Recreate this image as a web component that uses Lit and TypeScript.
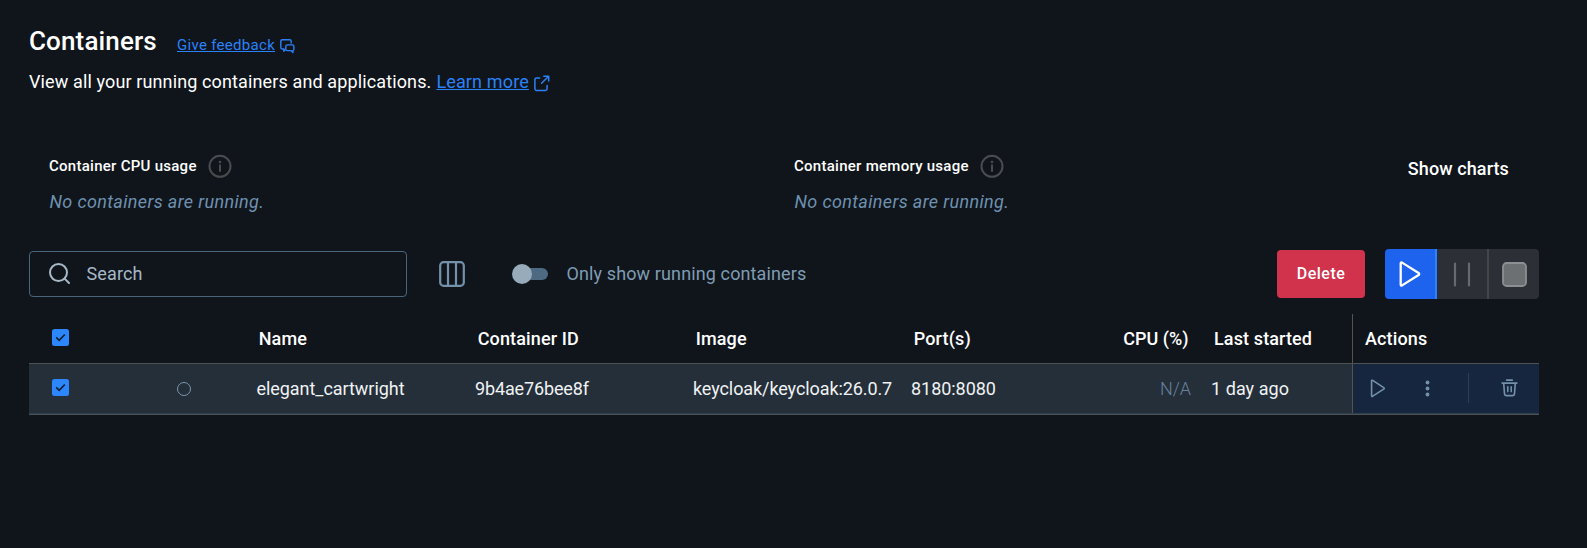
import { LitElement, html, css, svg } from "lit";
import { customElement, property } from "lit/decorators.js";

const icons = {
  feedback: svg`<svg width="16" height="15" viewBox="0 0 16 15" fill="none" stroke="currentColor" stroke-width="1.4" stroke-linejoin="round"><path d="M5.4 10.6 3.8 12.2V10H2.4Q.8 10 .8 8.4V2.3Q.8.7 2.4.7H9.6Q11.2.7 11.2 2.3V4.4"/><path d="M7.3 5.9H12.3Q13.9 5.9 13.9 7.4V10.2Q13.9 11.6 12.9 11.6V13.5L10.9 11.6H7.3Q5.8 11.6 5.8 10.2V7.4Q5.8 5.9 7.3 5.9Z"/></svg>`,
  external: svg`<svg width="16" height="17" viewBox="0 0 16 17" fill="none" stroke="currentColor" stroke-width="1.5" stroke-linecap="round" stroke-linejoin="round"><path d="M5.6 2.9H2.6Q.9 2.9.9 4.6V13.8Q.9 15.5 2.6 15.5H11.4Q13.1 15.5 13.1 13.8V10.4M9.8 1.2H14.7V6.1M14.4 1.5 7.6 8.3"/></svg>`,
  info: svg`<svg width="24" height="24" viewBox="0 0 24 24" fill="none" stroke="currentColor" stroke-width="2"><circle cx="12" cy="12.3" r="10.5"/><path d="M12 11.2V17" stroke-linecap="round"/><circle cx="12" cy="8" r="1.3" fill="currentColor" stroke="none"/></svg>`,
  search: svg`<svg width="22" height="22" viewBox="0 0 22 22" fill="none" stroke="currentColor" stroke-width="2" stroke-linecap="round"><circle cx="9.5" cy="9.5" r="8.5"/><path d="M15.6 15.6 20 20"/></svg>`,
  columns: svg`<svg width="26" height="26" viewBox="0 0 26 26" fill="none" stroke="currentColor" stroke-width="2.2"><rect x="1.2" y="1.2" width="23.6" height="23.6" rx="3.4"/><path d="M9 1V25M17 1V25"/></svg>`,
  playLarge: svg`<svg width="22" height="26" viewBox="0 0 22 26" fill="none" stroke="currentColor" stroke-width="2.3" stroke-linejoin="round"><path d="M1.7 2.4Q1.7.8 3.1 1.6L19.6 12Q20.8 13 19.6 14L3.1 24.4Q1.7 25.2 1.7 23.6Z"/></svg>`,
  pause: svg`<svg width="18" height="25" viewBox="0 0 18 25" fill="none" stroke="currentColor" stroke-width="2.2" stroke-linecap="round"><path d="M2 1.5V23.5M16 1.5V23.5"/></svg>`,
  stop: svg`<svg width="25" height="25" viewBox="0 0 25 25"><rect x="1" y="1" width="23" height="23" rx="3.6" fill="#6d7073" stroke="#8d8f92" stroke-width="1.8"/></svg>`,
  play: svg`<svg width="16" height="19" viewBox="0 0 16 19" fill="none" stroke="currentColor" stroke-width="1.6" stroke-linejoin="round"><path d="M1.6 2Q1.6.8 2.7 1.4L13.7 8.6Q14.8 9.4 13.7 10.2L2.7 17.2Q1.6 17.8 1.6 16.8Z"/></svg>`,
  dots: svg`<svg width="5" height="17" viewBox="0 0 5 17" fill="currentColor"><circle cx="2.5" cy="2.5" r="1.9"/><circle cx="2.5" cy="8.5" r="1.9"/><circle cx="2.5" cy="14.5" r="1.9"/></svg>`,
  trash: svg`<svg width="17" height="18" viewBox="0 0 17 18" fill="none" stroke="currentColor" stroke-width="1.6" stroke-linecap="round" stroke-linejoin="round"><path d="M5.6 1.1H11.4M1.1 4.1H15.9M2.7 4.3 3.5 14.6Q3.7 16.6 5.6 16.6H11.4Q13.3 16.6 13.5 14.6L14.3 4.3M6.8 7.8V12.6M10.2 7.8V12.6"/></svg>`,
  check: svg`<svg width="17" height="17" viewBox="0 0 17 17" fill="none" stroke="currentColor" stroke-width="1.7"><path d="M4.2 8.4 7.2 11.3 12.8 5.5"/></svg>`,
};

@customElement("usage-stat")
class UsageStat extends LitElement {
  @property() label = "";
  static styles = css`
    :host { display: block; }
    .head { display: flex; align-items: center; gap: 10.8px; height: 24px; font-size: 15px; font-weight: 500; letter-spacing: 0.27px; line-height: 24px; color: #fff; }
    .head svg { display: block; color: #4b4c4f; }
    .empty { margin-top: 11px; padding-left: 0.5px; line-height: 25px; font-style: italic; letter-spacing: 0.36px; color: #6e91b0; }
  `;
  render() {
    return html`<div class="head"><span>${this.label}</span>${icons.info}</div>
      <div class="empty">No containers are running.</div>`;
  }
}

@customElement("app-root")
class AppRoot extends LitElement {
  static styles = css`
    :host { display: block; box-sizing: border-box; height: 548px; padding: 25px 48px 0 29px; overflow: hidden;
      background: #10151b; color: #fff; font: 400 18px/25px Roboto, sans-serif; }
    svg { display: block; flex: none; }
    .title { display: flex; height: 32px; line-height: 32px; }
    h1 { margin: 0; width: 148px; font-size: 26px; font-weight: 500; letter-spacing: 0.14px; line-height: 32px; }
    .link { color: #2b81f8; display: flex; }
    .link span { text-decoration: underline; }
    .feedback { font-size: 15px; letter-spacing: 0.3px; line-height: 40px; gap: 4.5px; }
    .feedback svg { margin-top: 14px; }
    .intro { display: flex; margin-top: 10px; line-height: 29px; letter-spacing: 0.125px; gap: 5px; }
    .learn { letter-spacing: 0.14px; gap: 5.5px; }
    .learn svg { margin-top: 8px; }
    .stats { display: grid; grid-template-columns: 745px 1fr auto; margin-top: 58px; padding: 0 30px 0 20px; height: 95px; }
    .charts { margin-top: 2px; font-weight: 500; letter-spacing: 0.1px; }
    .toolbar { display: flex; align-items: center; height: 50px; }
    .search { box-sizing: border-box; display: flex; align-items: center; width: 378px; height: 46px; padding-left: 19px; gap: 15.5px;
      border: 1px solid #48657b; border-radius: 4px; color: #a7b8c6; letter-spacing: 0.12px; }
    .search span, .only { padding-bottom: 1.5px; }
    .columns { margin-left: 32px; color: #7391aa; }
    .switch { display: flex; align-items: center; width: 36px; height: 20px; margin-left: 47px; }
    .track { width: 24px; height: 12px; margin-left: -8px; border-radius: 0 6px 6px 0; background: #4d6a82; }
    .knob { z-index: 1; width: 20px; height: 20px; border-radius: 50%; background: #97abbb; }
    .only { margin-left: 18.5px; color: #7f9cb3; letter-spacing: 0.12px; }
    .delete { box-sizing: border-box; width: 88px; height: 48px; margin-left: auto; border-radius: 4px; background: #d1334c;
      font-size: 16px; font-weight: 500; letter-spacing: 0.5px; line-height: 47px; text-align: center; }
    .group { display: flex; height: 50px; margin-left: 20px; border-radius: 4px; overflow: hidden; }
    .btn { display: flex; align-items: center; justify-content: center; width: 50px; background: #2c2f35; color: #66696d; }
    .btn + .btn { border-left: 2px solid #43464b; }
    .btn.primary { background: #1d63ed; color: #fff; }
    .btn.primary + .btn { border-left-color: #2b84ff; }
    .table { margin-top: 15px; }
    .row { display: grid; grid-template-columns: 134px 93px 219px 218px 218px 120px 160px 161px 187px; height: 49px; align-items: center; }
    .header { font-weight: 500; letter-spacing: 0.14px; }
    .header > .text { padding-left: 2.7px; }
    .header > .cpu { padding-right: 2.4px; letter-spacing: 0; }
    .header .check { margin-bottom: 2px; }
    .data { background: #242f3a; border-top: 1px solid #505153; border-bottom: 1px solid #4d5053; letter-spacing: -0.04px; color: #f0f2f3;
      box-shadow: inset 0 -1px #2c3f4f; height: 50px; }
    .data > * { margin-bottom: 1px; }
    .data > .check { margin-bottom: 3px; }
    .check { width: 17px; height: 17px; margin-left: 22.5px; border-radius: 2.5px; background: #2b86ff; color: #15202b; }
    .status { box-sizing: border-box; width: 14px; height: 14px; margin-left: 14.2px; border: 1.4px solid #7895ae; border-radius: 50%; }
    .name { padding-left: 0.4px; }
    .id { letter-spacing: -0.14px; }
    .image { letter-spacing: -0.09px; }
    .cpu { text-align: right; }
    .data .cpu { color: #67819a; font-weight: 300; }
    .header .last { padding-left: 23px; letter-spacing: 0.12px; }
    .last { padding-left: 20px; letter-spacing: 0.05px; }
    .actions { box-sizing: border-box; height: 49px; border-left: 1px solid #55524f; }
    .header .actions { padding: 12px 0 0 12px; }
    .data .actions { display: flex; align-items: center; align-self: start; padding: 0 0 1px 17px; background: #16263f; color: #7391ab; }
    .dots { margin-left: 39px; }
    .rule { width: 1px; height: 30px; margin-left: 38px; background: #2b3f58; }
    .trash { margin-left: 31.5px; }
  `;

  private row = { name: "elegant_cartwright", id: "9b4ae76bee8f", image: "keycloak/keycloak:26.0.7", ports: "8180:8080", cpu: "N/A", last: "1 day ago" };

  render() {
    const r = this.row;
    return html`
      <div class="title"><h1>Containers</h1><a class="link feedback"><span>Give feedback</span>${icons.feedback}</a></div>
      <div class="intro"><div>View all your running containers and applications.</div><a class="link learn"><span>Learn more</span>${icons.external}</a></div>
      <div class="stats">
        <usage-stat label="Container CPU usage"></usage-stat>
        <usage-stat label="Container memory usage"></usage-stat>
        <div class="charts">Show charts</div>
      </div>
      <div class="toolbar">
        <div class="search">${icons.search}<span>Search</span></div>
        <div class="columns">${icons.columns}</div>
        <div class="switch"><div class="knob"></div><div class="track"></div></div>
        <div class="only">Only show running containers</div>
        <div class="delete">Delete</div>
        <div class="group">
          <div class="btn primary">${icons.playLarge}</div>
          <div class="btn">${icons.pause}</div>
          <div class="btn">${icons.stop}</div>
        </div>
      </div>
      <div class="table">
        <div class="row header">
          <div class="check">${icons.check}</div><div></div>
          <div class="text">Name</div><div class="text">Container ID</div><div class="text">Image</div><div class="text">Port(s)</div>
          <div class="cpu">CPU (%)</div><div class="last">Last started</div><div class="actions">Actions</div>
        </div>
        <div class="row data">
          <div class="check">${icons.check}</div><div class="status"></div>
          <div class="name">${r.name}</div><div class="id">${r.id}</div><div class="image">${r.image}</div><div>${r.ports}</div>
          <div class="cpu">${r.cpu}</div><div class="last">${r.last}</div>
          <div class="actions">${icons.play}<div class="dots">${icons.dots}</div><div class="rule"></div><div class="trash">${icons.trash}</div></div>
        </div>
      </div>`;
  }
}
